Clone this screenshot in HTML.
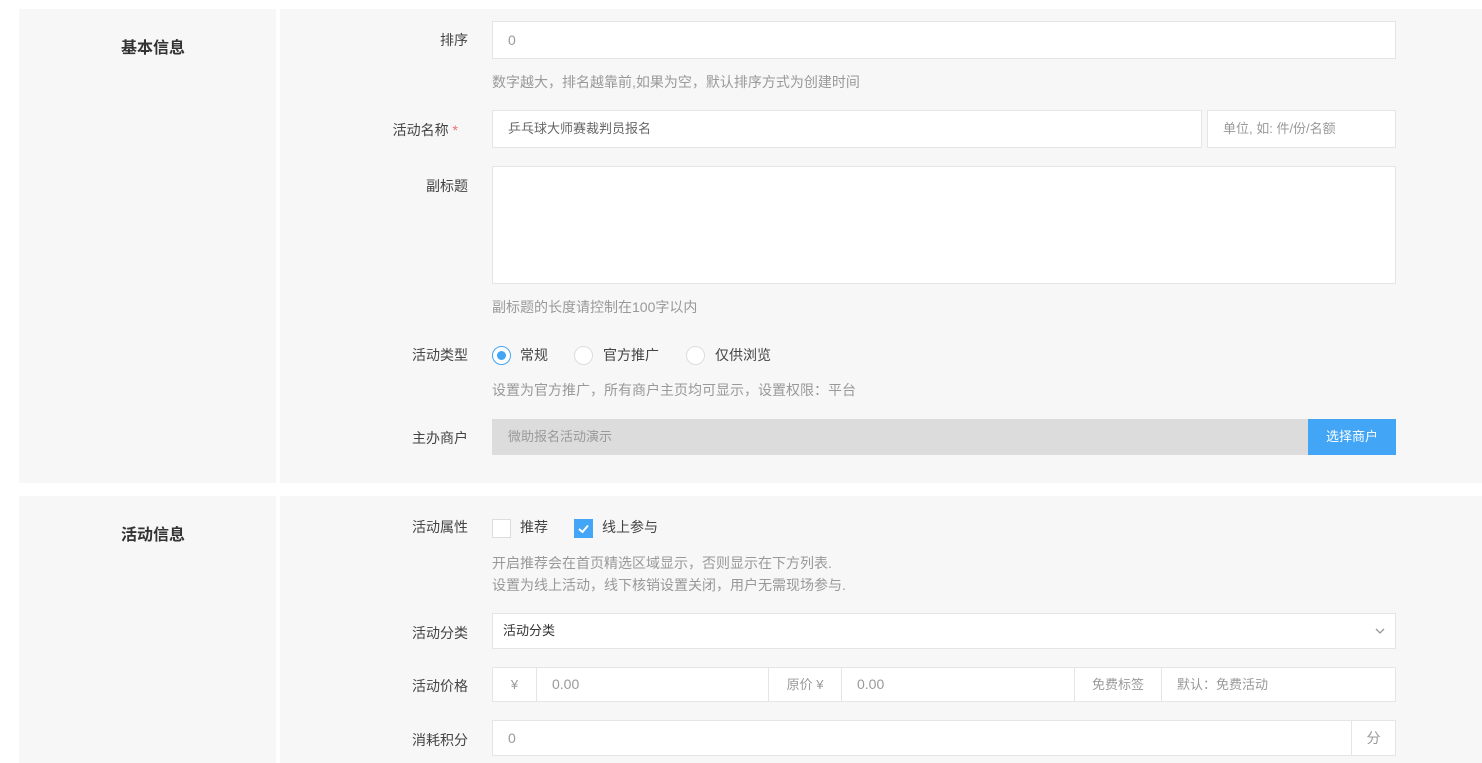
<!DOCTYPE html>
<html><head><meta charset="utf-8"><style>
*{box-sizing:border-box;margin:0;padding:0}
body{width:1482px;height:763px;background:#fff;position:relative;overflow:hidden;font-family:"Liberation Sans","Noto Sans CJK SC",sans-serif;font-size:14px;color:#333}
.a{position:absolute}
.bg{background:#f7f7f7}
.t{font-weight:bold;font-size:16px;color:#333}
.lb{position:absolute;width:120px;left:348px;text-align:right;line-height:20px;color:#444}
.h{position:absolute;left:492px;color:#999;line-height:20px}
.in{position:absolute;background:#fff;border:1px solid #e5e5e5;line-height:34px;padding-left:15px;color:#999}
.c{position:absolute;border:1px solid #e5e5e5;background:#fff;text-align:center;color:#999;font-size:13px}
.rd{position:absolute;width:19px;height:19px;border:1px solid #ddd;border-radius:50%;background:#fff}
.ck{position:absolute;width:19px;height:19px;border:1px solid #ddd;background:#fff}
.tx{position:absolute;line-height:20px;color:#444}
</style></head><body>
<div class="a bg" style="left:19px;top:9px;width:257px;height:474px"></div>
<div class="a bg" style="left:280px;top:9px;width:1202px;height:474px"></div>
<div class="a bg" style="left:19px;top:496px;width:257px;height:267px"></div>
<div class="a bg" style="left:280px;top:496px;width:1202px;height:267px"></div>
<div class="a t" style="left:121px;top:34px">基本信息</div>
<div class="a t" style="left:121px;top:521px">活动信息</div>

<div class="lb" style="top:30px">排序</div>
<div class="in" style="left:492px;top:21px;width:904px;height:38px;line-height:36px">0</div>
<div class="h" style="top:72px">数字越大，排名越靠前,如果为空，默认排序方式为创建时间</div>

<div class="lb" style="top:120px;left:338px">活动名称 <span style="color:#f56c6c">*</span></div>
<div class="in" style="left:492px;top:110px;width:710px;height:38px;line-height:36px;color:#666;font-size:13px">乒乓球大师赛裁判员报名</div>
<div class="in" style="left:1207px;top:110px;width:189px;height:38px;line-height:36px;font-size:13px">单位, 如: 件/份/名额</div>

<div class="lb" style="top:176px">副标题</div>
<div class="in" style="left:492px;top:166px;width:904px;height:118px"></div>
<div class="h" style="top:297px">副标题的长度请控制在100字以内</div>

<div class="lb" style="top:345px">活动类型</div>
<div class="rd" style="left:492px;top:346px;border-color:#42a5f5"><div class="a" style="left:4px;top:4px;width:9px;height:9px;border-radius:50%;background:#42a5f5"></div></div>
<div class="tx" style="left:520px;top:345px">常规</div>
<div class="rd" style="left:574px;top:346px"></div>
<div class="tx" style="left:603px;top:345px">官方推广</div>
<div class="rd" style="left:686px;top:346px"></div>
<div class="tx" style="left:715px;top:345px">仅供浏览</div>
<div class="h" style="top:380px">设置为官方推广，所有商户主页均可显示，设置权限：平台</div>

<div class="lb" style="top:428px">主办商户</div>
<div class="in" style="left:492px;top:419px;width:817px;height:36px;background:#dcdcdc;border-color:#dcdcdc;font-size:13px">微助报名活动演示</div>
<div class="a" style="left:1308px;top:419px;width:88px;height:36px;background:#42a5f5;color:#fff;text-align:center;line-height:36px;font-size:13px">选择商户</div>

<div class="lb" style="top:517px">活动属性</div>
<div class="ck" style="left:492px;top:519px"></div>
<div class="tx" style="left:520px;top:517px">推荐</div>
<div class="ck" style="left:574px;top:519px;background:#42a5f5;border-color:#42a5f5"><svg width="17" height="17" style="position:absolute;left:0;top:0"><path d="M4 9 L7.5 12 L13 5.5" stroke="#fff" stroke-width="2" fill="none"/></svg></div>
<div class="tx" style="left:602px;top:517px">线上参与</div>
<div class="h" style="top:553px">开启推荐会在首页精选区域显示，否则显示在下方列表.</div>
<div class="h" style="top:575px">设置为线上活动，线下核销设置关闭，用户无需现场参与.</div>

<div class="lb" style="top:623px">活动分类</div>
<div class="in" style="left:492px;top:613px;width:904px;height:36px;color:#333;font-size:13px;padding-left:10px">活动分类<svg class="a" style="right:10px;top:13px" width="10" height="8"><path d="M1 2 L5 6 L9 2" stroke="#999" stroke-width="1.3" fill="none"/></svg></div>

<div class="lb" style="top:676px">活动价格</div>
<div class="c" style="left:492px;top:667px;width:45px;height:35px;line-height:33px">¥</div>
<div class="in" style="left:536px;top:667px;width:233px;height:35px;line-height:33px">0.00</div>
<div class="c" style="left:768px;top:667px;width:74px;height:35px;line-height:33px">原价 ¥</div>
<div class="in" style="left:841px;top:667px;width:234px;height:35px;line-height:33px">0.00</div>
<div class="c" style="left:1074px;top:667px;width:88px;height:35px;line-height:33px">免费标签</div>
<div class="in" style="left:1161px;top:667px;width:235px;height:35px;line-height:33px;font-size:13px">默认：免费活动</div>

<div class="lb" style="top:730px">消耗积分</div>
<div class="in" style="left:492px;top:720px;width:860px;height:36px">0</div>
<div class="c" style="left:1351px;top:720px;width:45px;height:36px;line-height:34px;font-size:14px">分</div>
</body></html>
